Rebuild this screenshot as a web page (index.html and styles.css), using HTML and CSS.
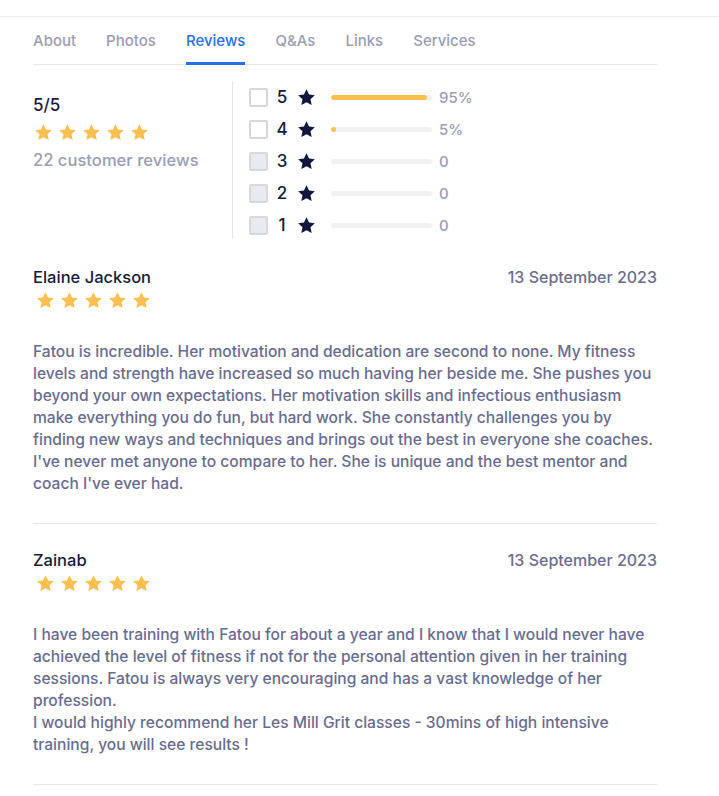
FILE: index.html
```html
<!DOCTYPE html>
<html>
<head>
<meta charset="utf-8">
<link rel="stylesheet" href="styles.css">
</head>
<body>
<div class="topbar"></div>
<main class="wrap">
  <nav class="tabs">
    <a class="tab">About</a>
    <a class="tab">Photos</a>
    <a class="tab active">Reviews</a>
    <a class="tab">Q&amp;As</a>
    <a class="tab">Links</a>
    <a class="tab">Services</a>
  </nav>

  <section class="summary">
    <div class="score">
      <div class="score-val">5/5</div>
      <div class="stars big">
        <svg viewBox="0 0 24 24"><path d="M12 2.5l2.9 6.1 6.6.8-4.9 4.6 1.3 6.6L12 17.3l-5.9 3.3 1.3-6.6-4.9-4.6 6.6-.8z"/></svg>
        <svg viewBox="0 0 24 24"><path d="M12 2.5l2.9 6.1 6.6.8-4.9 4.6 1.3 6.6L12 17.3l-5.9 3.3 1.3-6.6-4.9-4.6 6.6-.8z"/></svg>
        <svg viewBox="0 0 24 24"><path d="M12 2.5l2.9 6.1 6.6.8-4.9 4.6 1.3 6.6L12 17.3l-5.9 3.3 1.3-6.6-4.9-4.6 6.6-.8z"/></svg>
        <svg viewBox="0 0 24 24"><path d="M12 2.5l2.9 6.1 6.6.8-4.9 4.6 1.3 6.6L12 17.3l-5.9 3.3 1.3-6.6-4.9-4.6 6.6-.8z"/></svg>
        <svg viewBox="0 0 24 24"><path d="M12 2.5l2.9 6.1 6.6.8-4.9 4.6 1.3 6.6L12 17.3l-5.9 3.3 1.3-6.6-4.9-4.6 6.6-.8z"/></svg>
      </div>
      <div class="score-count">22 customer reviews</div>
    </div>
    <div class="dist">
      <div class="row"><span class="box"></span><span class="num">5</span><svg class="dstar" viewBox="0 0 24 24"><path d="M12 2.5l2.9 6.1 6.6.8-4.9 4.6 1.3 6.6L12 17.3l-5.9 3.3 1.3-6.6-4.9-4.6 6.6-.8z"/></svg><span class="bar"><span class="fill" style="width:95%"></span></span><span class="pct">95%</span></div>
      <div class="row"><span class="box"></span><span class="num">4</span><svg class="dstar" viewBox="0 0 24 24"><path d="M12 2.5l2.9 6.1 6.6.8-4.9 4.6 1.3 6.6L12 17.3l-5.9 3.3 1.3-6.6-4.9-4.6 6.6-.8z"/></svg><span class="bar"><span class="fill" style="width:5%"></span></span><span class="pct">5%</span></div>
      <div class="row"><span class="box off"></span><span class="num">3</span><svg class="dstar" viewBox="0 0 24 24"><path d="M12 2.5l2.9 6.1 6.6.8-4.9 4.6 1.3 6.6L12 17.3l-5.9 3.3 1.3-6.6-4.9-4.6 6.6-.8z"/></svg><span class="bar"></span><span class="pct">0</span></div>
      <div class="row"><span class="box off"></span><span class="num">2</span><svg class="dstar" viewBox="0 0 24 24"><path d="M12 2.5l2.9 6.1 6.6.8-4.9 4.6 1.3 6.6L12 17.3l-5.9 3.3 1.3-6.6-4.9-4.6 6.6-.8z"/></svg><span class="bar"></span><span class="pct">0</span></div>
      <div class="row"><span class="box off"></span><span class="num">1</span><svg class="dstar" viewBox="0 0 24 24"><path d="M12 2.5l2.9 6.1 6.6.8-4.9 4.6 1.3 6.6L12 17.3l-5.9 3.3 1.3-6.6-4.9-4.6 6.6-.8z"/></svg><span class="bar"></span><span class="pct">0</span></div>
    </div>
  </section>

  <article class="review">
    <header class="rhead">
      <div>
        <div class="name">Elaine Jackson</div>
        <div class="stars small">
          <svg viewBox="0 0 24 24"><path d="M12 2.5l2.9 6.1 6.6.8-4.9 4.6 1.3 6.6L12 17.3l-5.9 3.3 1.3-6.6-4.9-4.6 6.6-.8z"/></svg>
          <svg viewBox="0 0 24 24"><path d="M12 2.5l2.9 6.1 6.6.8-4.9 4.6 1.3 6.6L12 17.3l-5.9 3.3 1.3-6.6-4.9-4.6 6.6-.8z"/></svg>
          <svg viewBox="0 0 24 24"><path d="M12 2.5l2.9 6.1 6.6.8-4.9 4.6 1.3 6.6L12 17.3l-5.9 3.3 1.3-6.6-4.9-4.6 6.6-.8z"/></svg>
          <svg viewBox="0 0 24 24"><path d="M12 2.5l2.9 6.1 6.6.8-4.9 4.6 1.3 6.6L12 17.3l-5.9 3.3 1.3-6.6-4.9-4.6 6.6-.8z"/></svg>
          <svg viewBox="0 0 24 24"><path d="M12 2.5l2.9 6.1 6.6.8-4.9 4.6 1.3 6.6L12 17.3l-5.9 3.3 1.3-6.6-4.9-4.6 6.6-.8z"/></svg>
        </div>
      </div>
      <div class="date">13 September 2023</div>
    </header>
    <p class="text">Fatou is incredible. Her motivation and dedication are second to none. My fitness levels and strength have increased so much having her beside me. She pushes you beyond your own expectations. Her motivation skills and infectious enthusiasm make everything you do fun, but hard work. She constantly challenges you by finding new ways and techniques and brings out the best in everyone she coaches. I've never met anyone to compare to her. She is unique and the best mentor and coach I've ever had.</p>
  </article>

  <article class="review">
    <header class="rhead">
      <div>
        <div class="name">Zainab</div>
        <div class="stars small">
          <svg viewBox="0 0 24 24"><path d="M12 2.5l2.9 6.1 6.6.8-4.9 4.6 1.3 6.6L12 17.3l-5.9 3.3 1.3-6.6-4.9-4.6 6.6-.8z"/></svg>
          <svg viewBox="0 0 24 24"><path d="M12 2.5l2.9 6.1 6.6.8-4.9 4.6 1.3 6.6L12 17.3l-5.9 3.3 1.3-6.6-4.9-4.6 6.6-.8z"/></svg>
          <svg viewBox="0 0 24 24"><path d="M12 2.5l2.9 6.1 6.6.8-4.9 4.6 1.3 6.6L12 17.3l-5.9 3.3 1.3-6.6-4.9-4.6 6.6-.8z"/></svg>
          <svg viewBox="0 0 24 24"><path d="M12 2.5l2.9 6.1 6.6.8-4.9 4.6 1.3 6.6L12 17.3l-5.9 3.3 1.3-6.6-4.9-4.6 6.6-.8z"/></svg>
          <svg viewBox="0 0 24 24"><path d="M12 2.5l2.9 6.1 6.6.8-4.9 4.6 1.3 6.6L12 17.3l-5.9 3.3 1.3-6.6-4.9-4.6 6.6-.8z"/></svg>
        </div>
      </div>
      <div class="date">13 September 2023</div>
    </header>
    <p class="text">I have been training with Fatou for about a year and I know that I would never have achieved the level of fitness if not for the personal attention given in her training sessions. Fatou is always very encouraging and has a vast knowledge of her profession.<br>I would highly recommend her Les Mill Grit classes - 30mins of high intensive training, you will see results !</p>
  </article>
</main>
</body>
</html>
```

FILE: styles.css
```css
* { box-sizing: border-box; }
html, body { margin: 0; padding: 0; background: #fff; }
body {
  font-family: Inter, "Liberation Sans", sans-serif;
  font-weight: 500;
  color: #161a3b;
}
.topbar {
  height: 17px;
  border-bottom: 1px solid #eeeef2;
  box-shadow: 0 1px 3px rgba(0,0,0,0.03);
}
.wrap {
  width: 624px;
  margin-left: 33px;
}
.tabs {
  display: flex;
  border-bottom: 1px solid #e6e6ea;
  height: 48px;
  align-items: stretch;
}
.tab {
  font-size: 15px;
  color: #9c9db2;
  padding-top: 14px;
  margin-right: 30px;
  border-bottom: 3px solid transparent;
  margin-bottom: -1px;
  line-height: 20px;
}
.tab.active {
  color: #2a6ee8;
  border-bottom-color: #2a6ee8;
}
.summary {
  display: flex;
  padding-top: 16px;
  padding-bottom: 2px;
}
.score {
  width: 199px;
  padding-top: 13px;
}
.score-val {
  font-size: 17px;
  line-height: 22px;
  color: #161a3b;
}
.stars { display: flex; }
.stars svg { fill: #f9bf4f; display: block; }
.stars.big { gap: 3px; margin-top: 6px; }
.stars.big svg { width: 21px; height: 21px; }
.score-count {
  font-size: 16.6px;
  color: #9c9db2;
  margin-top: 7px;
}
.dist {
  border-left: 1px solid #e6e6ea;
  padding-left: 16px;
  height: 158px;
}
.row {
  display: flex;
  align-items: center;
  height: 32px;
}
.box {
  width: 19px;
  height: 19px;
  border: 2px solid #d6d8e0;
  border-radius: 2px;
  background: #fff;
}
.box.off { background: #e8eaef; }
.num {
  font-size: 17px;
  width: 22px;
  text-align: center;
  margin-left: 3px;
  color: #161a3b;
}
.dstar { width: 21px; height: 21px; fill: #12163a; margin-left: 3px; }
.bar {
  width: 101px;
  height: 5px;
  background: #f1f1f4;
  border-radius: 3px;
  margin-left: 14px;
  overflow: hidden;
}
.fill { display: block; height: 100%; background: #f9bf4f; border-radius: 3px; }
.pct { font-size: 15px; color: #9c9db2; margin-left: 7px; }
.review {
  border-bottom: 1px solid #e6e6ea;
  padding-top: 24px;
  padding-bottom: 12px;
}
.rhead {
  display: flex;
  justify-content: space-between;
  align-items: flex-start;
}
.name { font-size: 16.5px; line-height: 24px; color: #161a3b; }
.stars.small { gap: 3px; margin-top: 1px; margin-left: 2px; }
.stars.small svg { width: 21px; height: 21px; }
.date { font-size: 16px; color: #6b6d90; line-height: 24px; }
.text {
  margin: 30px 0 16px;
  font-size: 15.6px;
  line-height: 22px;
  color: #696c90;
}
```
